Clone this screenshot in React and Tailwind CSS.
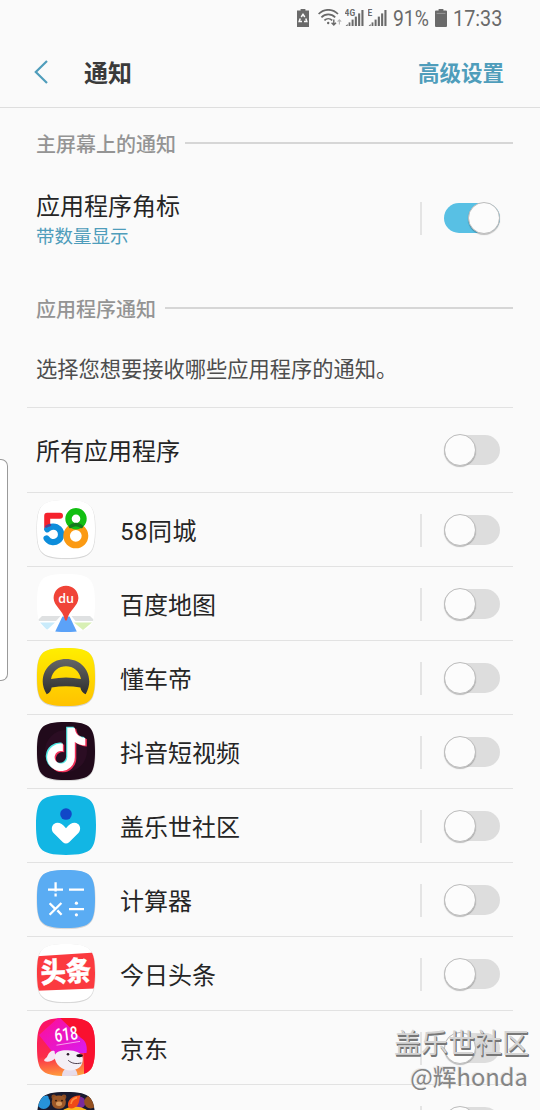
import { useId, useState } from 'react';
import { FaTiktok } from 'react-icons/fa';

const SQUIRCLE =
  'M29 0C42 0 49.5 1.6 53.4 6.2C56.8 10.2 58 17.5 58 29C58 40.5 56.8 47.8 53.4 51.8C49.5 56.4 42 58 29 58C16 58 8.5 56.4 4.6 51.8C1.2 47.8 0 40.5 0 29C0 17.5 1.2 10.2 4.6 6.2C8.5 1.6 16 0 29 0Z';

/** Rounded launcher icon frame, everything inside is clipped to it. */
function IconFrame({ fill, shadow = true, children }) {
  const id = useId();
  return (
    <svg viewBox="0 0 58 58" className="h-[58px] w-[58px] shrink-0 overflow-visible">
      <defs>
        <clipPath id={id}>
          <path d={SQUIRCLE} />
        </clipPath>
      </defs>
      {shadow && (
        <path d={SQUIRCLE} fill="#000" stroke="#000" strokeWidth="0.8" opacity="0.15" transform="translate(0 0.6)" />
      )}
      <path d={SQUIRCLE} fill={fill} />
      <g clipPath={`url(#${id})`}>{children}</g>
    </svg>
  );
}

function Icon58() {
  return (
    <IconFrame fill="#fff">
      <g fill="none" strokeLinecap="round" strokeLinejoin="round">
        <path d="M23 15.8H10.2V27" stroke="#f5222d" strokeWidth="6" />
        <path d="M10.3 29.3A7.8 7.8 0 1 1 9.6 38.4" stroke="#0d8ddb" strokeWidth="6.2" />
        <path d="M9.4 26.5A10.8 10.8 0 0 1 13 25" stroke="#5b3f8f" strokeWidth="2.6" />
        <circle cx="38.8" cy="35.8" r="9.2" stroke="#fb9a13" strokeWidth="6.6" />
        <circle cx="39" cy="18.8" r="7.5" stroke="#12bf12" strokeWidth="6.4" />
        <path d="M33.5 26.4A9.3 9.3 0 0 1 44.3 26.4" stroke="#137a1d" strokeWidth="3.6" />
      </g>
    </IconFrame>
  );
}

function IconBaiduMap() {
  return (
    <IconFrame fill="#fff" shadow={false}>
      <path d="M5 42H23.5L19 47H0Z" fill="#dfe1e2" />
      <path d="M34.5 42H53L58 47H38.5Z" fill="#dfe1e2" />
      <path d="M3 48.6H18L10 56Z" fill="#c9ebfb" />
      <path d="M37 48.6H55L46 56Z" fill="#d8f0b4" />
      <path d="M25.4 42.5H32.6L40 58H18Z" fill="#5ba2f8" />
      <path
        d="M29 11.8C36 11.8 41.4 17.2 41.4 24C41.4 32 32 36 30.2 45.6C29.9 47 28.1 47 27.8 45.6C26 36 16.6 32 16.6 24C16.6 17.2 22 11.8 29 11.8Z"
        fill="#f04438"
      />
      <text x="29" y="28.6" textAnchor="middle" fontSize="12.5" fontWeight="600" fill="#fff" fontFamily="Open Sans, sans-serif">
        du
      </text>
    </IconFrame>
  );
}

function IconDongchedi() {
  return (
    <IconFrame fill="url(#dcd-bg)">
      <defs>
        <linearGradient id="dcd-bg" x1="0" y1="0" x2="0" y2="1">
          <stop offset="0" stopColor="#ffee00" />
          <stop offset="1" stopColor="#ffc200" />
        </linearGradient>
        <linearGradient id="dcd-wheel" x1="0" y1="0" x2="0" y2="1">
          <stop offset="0" stopColor="#666" />
          <stop offset="1" stopColor="#2f2f2f" />
        </linearGradient>
      </defs>
      <path
        fillRule="evenodd"
        fill="url(#dcd-wheel)"
        d="M9.7 46.2C7 42 5.7 37 5.7 33.4C6 20 16 11 29 11C42 11 52 20 52.3 33.4C52.3 37 51 42 48.7 46.2C46.3 45.5 43.8 42.5 43.4 39.6C34 37.8 24 37.8 14.6 39.6C14.4 42.5 12.2 45.5 9.7 46.2ZM14 31C15.6 22.4 22 18.2 29 18.2C36 18.2 42.4 22.4 44 31C34 28.9 24 28.9 14 31Z"
      />
    </IconFrame>
  );
}

function IconDouyin() {
  return (
    <IconFrame fill="#210a1b">
      <circle cx="29" cy="29" r="21" fill="#35102b" opacity="0.5" />
      <FaTiktok x="6" y="4.4" size={44} color="#4fe8e4" />
      <FaTiktok x="8.6" y="6.4" size={44} color="#f1325a" />
      <FaTiktok x="7.4" y="5.5" size={43.6} color="#fff" />
    </IconFrame>
  );
}

function IconGalaxy() {
  return (
    <svg viewBox="0 0 58 58" className="-m-px h-[60px] w-[60px] shrink-0">
      <path d={SQUIRCLE} fill="#12b6e4" />
      <circle cx="29" cy="18.4" r="5.6" fill="#1148c8" />
      <path
        d="M17 36.8C14.6 34 14.8 30 17.4 28C20.6 25.6 24.6 26.6 29 32.2C33.4 26.6 37.4 25.6 40.6 28C43.2 30 43.4 34 41 36.8L32 45.6C30.2 47.2 27.8 47.2 26 45.6Z"
        fill="#fff"
      />
    </svg>
  );
}

function IconCalculator() {
  return (
    <IconFrame fill="#5aacf3">
      <g fill="none" stroke="#fff" strokeWidth="2.3">
        <path d="M11 19.6H26M18.6 12.2V21.6M18.6 23.4V26.6" />
        <path d="M32 19.6H47" />
        <path d="M24.4 33L12.6 44.8M12.6 33.2L18 38.6M20.4 40.4L24.6 44.8" />
        <path d="M32 39.2H47" />
      </g>
      <circle cx="39.4" cy="33.2" r="1.6" fill="#fff" />
      <circle cx="39.4" cy="44.8" r="1.6" fill="#fff" />
    </IconFrame>
  );
}

function IconToutiao() {
  return (
    <IconFrame fill="#fff">
      <path d="M0 12.2L58 8.4V44.4L0 46.8Z" fill="#fb3a3f" />
      <text
        x="0"
        y="9.4"
        textAnchor="middle"
        fontSize="25.5"
        fontWeight="900"
        fill="#fff"
        stroke="#fff"
        strokeWidth="0.3"
        fontFamily="Noto Sans CJK SC, sans-serif"
        transform="translate(28.8 27.4) rotate(-3) scale(1 1.1)"
      >
        头条
      </text>
    </IconFrame>
  );
}

function IconJd() {
  return (
    <IconFrame fill="url(#jd-bg)" shadow={false}>
      <defs>
        <linearGradient id="jd-bg" x1="0.2" y1="0" x2="0.3" y2="1">
          <stop offset="0" stopColor="#fb0f6a" />
          <stop offset="0.65" stopColor="#fb2b4a" />
          <stop offset="1" stopColor="#ff9a3c" />
        </linearGradient>
        <linearGradient id="jd-ray" x1="0" y1="0" x2="1" y2="1">
          <stop offset="0" stopColor="#ff0f93" />
          <stop offset="1" stopColor="#d81cf0" />
        </linearGradient>
      </defs>
      <path d="M22 0H58V58H47V30Z" fill="#f9112f" />
      <path d="M2 17L22 -1L44 20C49 23 50.5 28 49.5 35L17 36Z" fill="url(#jd-ray)" />
      <path d="M17.5 33C14 31.5 11.5 35 10 39C8 41 6.5 41.5 7.4 43C10 45 16 43 18.6 40Z" fill="#f6e6f4" />
      <path d="M25 58C25 54 27 51 30 50L38 51C40 53 40.5 56 40.5 58Z" fill="#e7dcea" />
      <path d="M17.5 38C19 33 25 31.8 31 32.2C38 32.6 45.5 34.5 45.8 40.5C46 47.5 42 52 34 52.4C25 52.4 18 47 17.5 38Z" fill="#f4eff6" />
      <ellipse cx="42.6" cy="37.6" rx="3.2" ry="1.7" fill="#171018" />
      <circle cx="31" cy="36.2" r="1.3" fill="#2b1b2b" />
      <path d="M31.5 42.6C35 45.6 39 46.2 44 45" fill="none" stroke="#4d3d4c" strokeWidth="1" strokeLinecap="round" />
      <text
        x="29.4"
        y="22.6"
        textAnchor="middle"
        fontSize="18.5"
        fontWeight="500"
        fill="#fff"
        fontFamily="Roboto, sans-serif"
        textLength="23.5"
        lengthAdjust="spacingAndGlyphs"
        transform="rotate(-7 29 18)"
      >
        618
      </text>
      <path d="M19.5 27.2L43 23.4" stroke="#fff" strokeWidth="0.7" opacity="0.85" />
    </IconFrame>
  );
}

function IconBears() {
  return (
    <IconFrame fill="#191a2e">
      <circle cx="6.6" cy="10.4" r="6.6" fill="#2793d8" />
      <circle cx="9.6" cy="5.4" r="2" fill="#2793d8" />
      <circle cx="16.8" cy="5" r="2.4" fill="#8b4a20" />
      <circle cx="27" cy="5" r="2.4" fill="#8b4a20" />
      <rect x="14.8" y="3.6" width="14" height="13.2" rx="6" fill="#9c5727" />
      <ellipse cx="22" cy="11.8" rx="3" ry="2.2" fill="#d99a5c" />
      <circle cx="19" cy="8.6" r="0.9" fill="#2b130a" />
      <circle cx="25" cy="8.6" r="0.9" fill="#2b130a" />
      <circle cx="42.4" cy="10.4" r="6" fill="#7a2a9c" />
      <circle cx="53.6" cy="10" r="6.4" fill="#95501f" />
      <ellipse cx="38" cy="24" rx="15" ry="9.5" fill="#fdb81c" />
      <path d="M31.5 15.5C29 9 35 3 43.5 3.5C42 7 43 9 41 12.5C39 16 34 17.5 31.5 15.5Z" fill="#ef4a17" />
      <path d="M34 12C34.5 8.4 37 6.2 40 5.6" fill="none" stroke="#ff8a3a" strokeWidth="1.6" />
    </IconFrame>
  );
}

const APPS = [
  { name: '58同城', icon: Icon58, tracking: 'tracking-[0.5px]' },
  { name: '百度地图', icon: IconBaiduMap },
  { name: '懂车帝', icon: IconDongchedi },
  { name: '抖音短视频', icon: IconDouyin },
  { name: '盖乐世社区', icon: IconGalaxy },
  { name: '计算器', icon: IconCalculator },
  { name: '今日头条', icon: IconToutiao },
  { name: '京东', icon: IconJd },
  { name: '', icon: IconBears },
];

function Toggle({ defaultOn = false }) {
  const [on, setOn] = useState(defaultOn);

  return (
    <button
      role="switch"
      aria-checked={on}
      onClick={() => setOn(!on)}
      className={`flex h-[30px] w-14 shrink-0 items-center rounded-full ${
        on ? 'justify-end bg-[#58c0e4]' : 'justify-start bg-[#dddddd]'
      }`}
    >
      <span className="h-8 w-8 shrink-0 rounded-full border border-[#bdbdbd] bg-[#fcfcfc] shadow-[0_1px_1px_rgba(0,0,0,0.25)]" />
    </button>
  );
}

function Divider() {
  return <span className="mr-[22px] h-[33px] w-0.5 shrink-0 bg-[#e4e4e4]" />;
}

function SectionTitle({ children }) {
  return (
    <div className="flex h-8 items-center gap-[9px] pr-[27px] pl-9">
      <h2 className="pt-[3px] text-[20px] leading-8 font-medium text-[#949494]">{children}</h2>
      <span className="h-[1.5px] flex-1 bg-[#d6d6d6]" />
    </div>
  );
}

function Signal({ label }) {
  return (
    <svg viewBox="0 0 19 18" className="h-[18px] w-[19px]" fill="#6a6a6a">
      <path d="M0.6 17L2.6 15V17Z" />
      <rect x="3.6" y="13.4" width="1.8" height="3.6" />
      <rect x="6.6" y="10.6" width="2" height="6.4" />
      <rect x="9.8" y="7.6" width="2.1" height="9.4" />
      <rect x="13.1" y="4.4" width="2.1" height="12.6" />
      <rect x="16.4" y="1" width="2.1" height="16" />
      <text x="-0.4" y="7" fontSize="8.4" fontWeight="700" fontFamily="Roboto, sans-serif">
        {label}
      </text>
    </svg>
  );
}

function StatusBar() {
  return (
    <div className="flex h-9 items-center pl-[297px] text-[#6a6a6a]">
      <svg viewBox="0 0 12 18" className="h-[18px] w-3">
        <path d="M3.6 0H8.4V1.6H12V18H0V1.6H3.6Z" fill="#6a6a6a" />
        <g fill="none" stroke="#fafafa" strokeWidth="1.5">
          <path d="M4.2 8L6 5.4L7.8 8" />
          <path d="M3.2 9.4L2.2 12.4H5" />
          <path d="M8.8 9.4L9.8 12.4H7" />
        </g>
      </svg>
      <svg viewBox="0 0 25 18" className="ml-[9px] h-[18px] w-[25px]" fill="none" stroke="#6a6a6a" strokeWidth="1.7">
        <path d="M0.6 5C6 -0.6 14.6 -0.6 20 5" />
        <path d="M3.4 8.4C7.2 4.4 13.4 4.4 17.2 8.4" />
        <path d="M6.4 11.4C8.6 9.2 12 9.2 14.2 11.4" />
        <circle cx="10.2" cy="14" r="1.2" fill="#6a6a6a" stroke="none" />
        <path d="M15.8 10.6V16M13.6 13.8L15.8 16L18 13.8" strokeWidth="1.4" />
        <path d="M21.4 15.4V11M19.6 12.6L21.4 10.8L23.2 12.6" stroke="#b5b5b5" strokeWidth="1.1" />
      </svg>
      <span className="ml-[2px] flex gap-1">
        <Signal label="4G" />
        <Signal label="E" />
      </span>
      <span className="ml-[6px] w-[42px] origin-left scale-x-[0.86] pt-px text-[22.5px] leading-none">91%</span>
      <svg viewBox="0 0 12 18" className="h-[18px] w-3" fill="#6a6a6a">
        <path d="M3.6 0H8.4V1.4H11Q12 1.4 12 2.4V17Q12 18 11 18H1Q0 18 0 17V2.4Q0 1.4 1 1.4H3.6Z" />
        <path d="M1.6 4.4H10.4" stroke="#a5a5a5" strokeWidth="0.8" />
      </svg>
      <span className="ml-[6px] origin-left scale-x-[0.88] pt-px text-[22.5px] leading-none">17:33</span>
    </div>
  );
}

function AppRow({ name, icon: Icon, tracking = '' }) {
  return (
    <li className="flex h-[74px] items-center border-t border-[#e2e2e2] pr-[13px] pb-px pl-[10px]">
      <Icon />
      <span className={`ml-[25px] flex-1 pt-[5px] text-[24px] leading-none text-[#252525] ${tracking}`}>{name}</span>
      <span className="flex items-center pt-0.5">
        <Divider />
        <Toggle />
      </span>
    </li>
  );
}

export default function App() {
  return (
    <div className="relative h-[1110px] w-[540px] overflow-hidden bg-[#fafafa] font-['Roboto','Noto_Sans_CJK_SC',sans-serif]">
      <StatusBar />

      {/* Title bar */}
      <header className="flex h-[72px] items-center border-b border-[#dedede] pr-9 pl-[34px]">
        <svg viewBox="0 0 14 24" className="h-6 w-[14px]" fill="none" stroke="#4f9dbb" strokeWidth="2.2">
          <path d="M13 1L1.8 12L13 23" />
        </svg>
        <h1 className="ml-9 flex-1 pt-[5px] text-[24px] leading-none font-bold text-[#3a3a3a]">通知</h1>
        <button className="pt-[5px] text-[21.5px] leading-none font-bold text-[#4f9dbb]">高级设置</button>
      </header>

      {/* Home screen badges */}
      <section className="pt-[19px]">
        <SectionTitle>主屏幕上的通知</SectionTitle>
        <div className="mt-5 flex h-[78px] items-center pr-10 pl-9">
          <div className="flex-1 pt-[5px]">
            <p className="text-[24px] leading-8 text-[#252525]">应用程序角标</p>
            <p className="text-[18.5px] leading-7 text-[#4f9dbb]">带数量显示</p>
          </div>
          <Divider />
          <Toggle defaultOn />
        </div>
      </section>

      {/* Per-app notifications */}
      <section className="pt-[35px]">
        <SectionTitle>应用程序通知</SectionTitle>
        <p className="h-[83px] pt-[30px] pl-9 text-[21.25px] leading-8 text-[#4d4d4d]">
          选择您想要接收哪些应用程序的通知。
        </p>
        <div className="mx-[27px]">
          <div className="flex h-[85px] items-center border-t border-[#e2e2e2] pr-[13px] pl-[9px]">
            <span className="flex-1 pt-[3px] text-[24px] leading-none text-[#252525]">所有应用程序</span>
            <Toggle />
          </div>
          <ul>
            {APPS.map((app, i) => (
              <AppRow key={i} {...app} />
            ))}
          </ul>
        </div>
      </section>

      {/* Edge panel handle */}
      <div className="absolute top-[459px] left-0 h-[222px] w-2 rounded-r-[7px] border border-l-0 border-[#9a9a9a] bg-white" />

      {/* Watermark */}
      <div className="pointer-events-none absolute right-[11px] bottom-[18px] text-right font-['Noto_Sans_CJK_SC',sans-serif]">
        <p className="text-[27px] leading-9 text-[#d4d4d4] [text-shadow:1px_1px_0_#777,1px_2px_0_#777]">盖乐世社区</p>
        <p className="mr-[1px] text-[23.8px] leading-8 text-[#858585] [text-shadow:-1px_-1px_0_#e8e8e8]">@辉honda</p>
      </div>
    </div>
  );
}
